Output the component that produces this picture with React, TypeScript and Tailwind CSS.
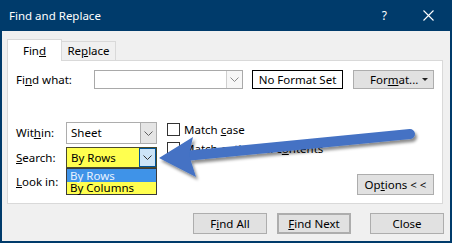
import React from 'react';

const FONT = { fontFamily: '"Noto Sans", "Open Sans", sans-serif' };

function Chevron({ color = '#606060' }: { color?: string }) {
  return (
    <svg width="9" height="5" viewBox="0 0 9 5" fill="none">
      <path d="M0.5 0.5 L4.5 4.5 L8.5 0.5" stroke={color} strokeWidth="1" />
    </svg>
  );
}

function Btn({ children, className = '' }: { children: React.ReactNode; className?: string }) {
  return (
    <div
      className={`h-[21px] w-[74px] flex items-center justify-center bg-[#e1e1e1] border border-[#adadad] text-[11.5px] text-black ${className}`}
    >
      {children}
    </div>
  );
}

function Check({ label }: { label: React.ReactNode }) {
  return (
    <div className="flex items-center h-[13px]">
      <div className="w-[13px] h-[13px] bg-white border border-[#333333]" />
      <span className="ml-[4px] text-[11.5px] leading-none text-black whitespace-nowrap">{label}</span>
    </div>
  );
}

export default function App() {
  return (
    <div
      className="relative w-[452px] h-[243px] bg-[#003b6b] flex flex-col overflow-hidden select-none"
      style={FONT}
    >
      {/* Title bar */}
      <div className="h-[31px] flex items-center text-white shrink-0">
        <span className="ml-[9px] text-[11.5px]">Find and Replace</span>
        <span className="ml-auto text-[12px] mr-[36px]">?</span>
        <svg width="11" height="11" viewBox="0 0 11 11" className="mr-[18px]">
          <path d="M0.5 0.5 L10.5 10.5 M10.5 0.5 L0.5 10.5" stroke="#ffffff" strokeWidth="1.1" />
        </svg>
      </div>

      {/* Body */}
      <div className="flex-1 mx-[2px] mb-[2px] bg-[#f0f0f0] flex flex-col">
        {/* Tabs */}
        <div className="flex items-end mt-[7px] ml-[5px] h-[22px]">
          <div className="relative z-10 h-[22px] w-[55px] -mb-[1px] bg-white border border-b-0 border-[#d9d9d9] flex items-center justify-center text-[11.5px] text-black">
            Fin<u>d</u>
          </div>
          <div className="h-[19px] w-[54px] border-t border-r border-[#d9d9d9] bg-[#f0f0f0] flex items-center justify-center text-[11.5px] text-black">
            Re<u>p</u>lace
          </div>
        </div>

        {/* Panel */}
        <div className="ml-[5px] w-[436px] h-[144px] bg-white border border-[#d9d9d9] flex flex-col text-[11.5px] text-black">
          {/* Find what row */}
          <div className="flex items-center mt-[9px] pl-[8px] h-[19px]">
            <span className="w-[78px]">
              Fi<u>n</u>d what:
            </span>
            <div className="w-[149px] h-[19px] bg-white border border-[#a9a9a9] flex">
              <div className="flex-1" />
              <div className="w-[16px] border-l border-[#cfcfcf] bg-[#f7f7f7] flex items-center justify-center">
                <Chevron color="#8a8a8a" />
              </div>
            </div>
            <div className="ml-[9px] w-[91px] h-[19px] border border-black bg-white flex items-center justify-center">
              No Format Set
            </div>
            <div className="ml-[10px] w-[81px] h-[19px] bg-[#e1e1e1] border border-[#adadad] flex items-center">
              <span className="ml-[16px]">
                For<u>m</u>at...
              </span>
              <svg width="6" height="3" viewBox="0 0 6 3" className="ml-auto mr-[5px]">
                <path d="M0 0 L6 0 L3 3 Z" fill="#222" />
              </svg>
            </div>
          </div>

          {/* Lower section */}
          <div className="flex mt-[33px]">
            <div className="flex flex-col pl-[8px]">
              <div className="flex items-center h-[22px]">
                <span className="w-[50px]">
                  Wit<u>h</u>in:
                </span>
                <div className="w-[91px] h-[22px] bg-white border border-[#adadad] flex">
                  <span className="flex-1 flex items-center pl-[4px]">Sheet</span>
                  <div className="w-[16px] bg-[#e5e5e5] border-l border-[#adadad] flex items-center justify-center">
                    <Chevron />
                  </div>
                </div>
              </div>
              <div className="relative flex items-center h-[21px] mt-[3px]">
                <span className="w-[50px]">
                  <u>S</u>earch:
                </span>
                <div className="w-[91px] h-[21px] bg-[#ffff4f] border border-[#4a4a2a] flex">
                  <span className="flex-1 flex items-center pl-[4px]">By Rows</span>
                  <div className="w-[17px] bg-[#cce4f7] border border-[#005499] flex items-center justify-center">
                    <Chevron color="#333" />
                  </div>
                </div>
                {/* open dropdown list */}
                <div className="absolute left-[50px] top-[21px] w-[91px] h-[27px] border border-[#3a3a3a] bg-[#ffff4f] flex flex-col z-20">
                  <div className="h-[13px] bg-[#3f93e8] text-[#e8f2ff] pl-[3px] leading-[13px]">By Rows</div>
                  <div className="h-[12px] pl-[3px] leading-[12px]">By Columns</div>
                </div>
              </div>
              <div className="flex items-center h-[22px] mt-[3px]">
                <span className="w-[50px]">
                  <u>L</u>ook in:
                </span>
              </div>
            </div>

            <div className="flex flex-col ml-[10px] pt-[1px]">
              <Check
                label={
                  <>
                    Match <u>c</u>ase
                  </>
                }
              />
              <div className="mt-[6px]">
                <Check
                  label={
                    <>
                      Match entire cell c<u>o</u>ntents
                    </>
                  }
                />
              </div>
            </div>

            <div className="flex-1 flex items-end justify-end pr-[8px]">
              <div className="w-[77px] h-[21px] mb-[-2px] bg-[#e1e1e1] border border-[#adadad] flex items-center justify-center">
                Op<u>t</u>ions &lt; &lt;
              </div>
            </div>
          </div>
        </div>

        {/* Bottom buttons */}
        <div className="flex justify-end mt-[9px] pr-[6px]">
          <Btn>
            F<u>i</u>nd All
          </Btn>
          <Btn className="ml-[10px] border-2 border-[#0078d7]">
            <u>F</u>ind Next
          </Btn>
          <Btn className="ml-[19px]">Close</Btn>
        </div>
      </div>

      {/* Annotation arrow overlay */}
      <svg
        className="absolute left-0 top-0 pointer-events-none z-30"
        width="452"
        height="243"
        viewBox="0 0 452 243"
      >
        <defs>
          <filter id="sh" x="-20%" y="-50%" width="140%" height="200%">
            <feDropShadow dx="2" dy="3" stdDeviation="1.6" floodColor="#000" floodOpacity="0.45" />
          </filter>
        </defs>
        <g filter="url(#sh)">
          <path d="M190 155.5 L410 134" stroke="#4472c4" strokeWidth="10" strokeLinecap="round" />
          <path d="M159 158 L193 137 L189 155 L196 177 Z" fill="#4472c4" />
        </g>
      </svg>
    </div>
  );
}
